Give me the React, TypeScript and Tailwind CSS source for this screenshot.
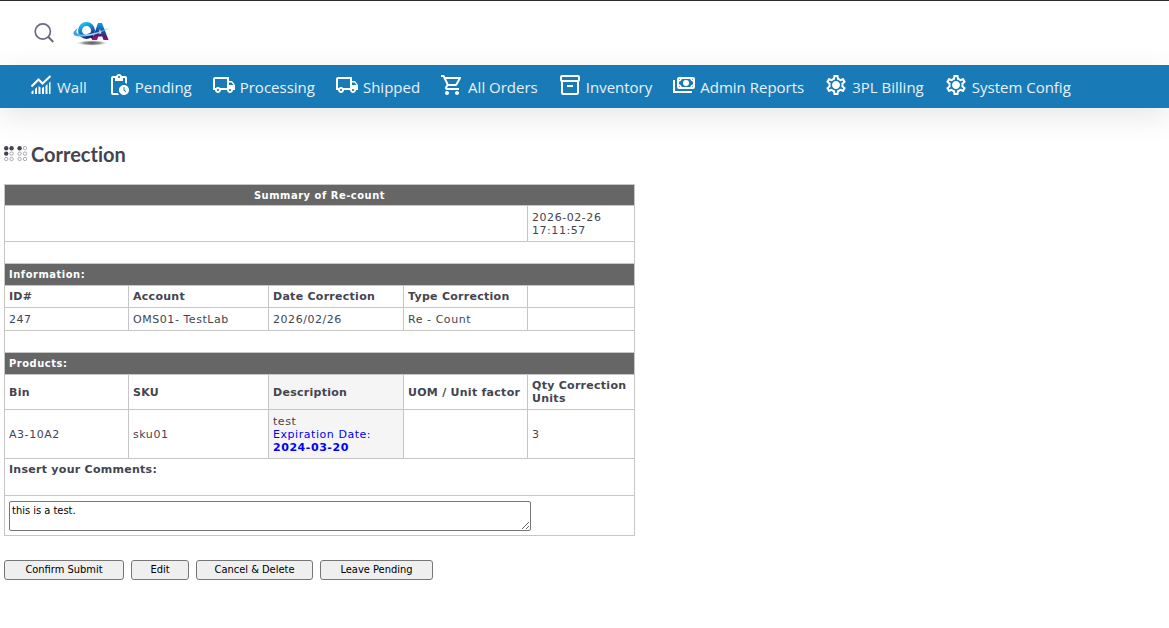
import type { ReactNode } from "react";
import {
  MdPendingActions,
  MdOutlineLocalShipping,
  MdOutlineSettings,
  MdOutlineShoppingCart,
  MdOutlineInventory2,
} from "react-icons/md";

function ChartIcon() {
  return (
    <svg viewBox="0 0 24 24" className="size-6" fill="currentColor" aria-hidden="true">
      <path d="M2.500 18.500 4.500 17v4h-2zM6 16l2-2v7H6zM9.500 13l2 1.500V21h-2zM13 15l2-1.500V21h-2zM16.500 13l2-2v10h-2zM20 10l1.500-1.500V21H20z" />
      <path d="m2.500 13.500 7-7 4 4 8-7.500" fill="none" stroke="currentColor" strokeWidth="2" />
    </svg>
  );
}

function GearIcon() {
  return (
    <span className="relative block size-6">
      <MdOutlineSettings className="size-6" />
      <svg viewBox="0 0 24 24" className="absolute inset-0 size-6" aria-hidden="true">
        <circle cx="12" cy="12" r="3" fill="currentColor" />
      </svg>
    </span>
  );
}

function PaymentsIcon() {
  return (
    <svg viewBox="0 0 24 24" className="size-6" aria-hidden="true">
      <path d="M2 7v12h18" fill="none" stroke="currentColor" strokeWidth="2" />
      <rect x="6" y="5" width="16" height="10" rx="1" fill="none" stroke="currentColor" strokeWidth="2" />
      <path d="M6 8a3 3 0 0 0 3-3M22 8a3 3 0 0 1-3-3M6 12a3 3 0 0 1 3 3M22 12a3 3 0 0 0-3 3" fill="none" stroke="currentColor" strokeWidth="1.500" />
      <circle cx="14" cy="10" r="3" fill="currentColor" />
    </svg>
  );
}

function Logo() {
  return (
    <svg viewBox="0 0 40 28" className="h-7 w-10" role="img" aria-label="QA">
      <defs>
        <linearGradient id="qa-q" x1=".2" y1="0" x2=".7" y2="1">
          <stop offset="0" stopColor="#16c0f0" />
          <stop offset=".5" stopColor="#1878c4" />
          <stop offset="1" stopColor="#1d2a78" />
        </linearGradient>
        <linearGradient id="qa-a" x1=".6" y1="0" x2=".4" y2="1">
          <stop offset="0" stopColor="#12a5e2" />
          <stop offset=".5" stopColor="#1c4c9c" />
          <stop offset=".75" stopColor="#5a1672" />
          <stop offset="1" stopColor="#b80a80" />
        </linearGradient>
        <linearGradient id="qa-swoosh" x1="0" x2="1">
          <stop offset="0" stopColor="#2b9fdb" />
          <stop offset=".5" stopColor="#a5e0f6" />
          <stop offset="1" stopColor="#38a8dc" />
        </linearGradient>
        <radialGradient id="qa-shadow">
          <stop offset="0" stopColor="#555" />
          <stop offset=".5" stopColor="#999" />
          <stop offset="1" stopColor="#fff" stopOpacity="0" />
        </radialGradient>
      </defs>
      <ellipse cx="20" cy="24" rx="17" ry="3" fill="url(#qa-shadow)" />
      <ellipse cx="14.500" cy="11.500" rx="6.500" ry="6.500" fill="none" stroke="url(#qa-q)" strokeWidth="4" />
      <path d="m15 15 6 6h4l-6-7z" fill="#221f6c" />
      <path fillRule="evenodd" d="M26 4h4l6.500 17h-5l-1.200-3.500h-4L25 21h-5zM28 10l-1.500 4.500h3z" fill="url(#qa-a)" />
      <path d="M6 9C-1 13 0 18 10 17.500c10 0 20-4 28-9-9 4-18 7-27 7C4 15.500 3 13 6 9Z" fill="url(#qa-swoosh)" />
    </svg>
  );
}

const links: { label: string; icon: ReactNode }[] = [
  { label: "Wall", icon: <ChartIcon /> },
  { label: "Pending", icon: <MdPendingActions className="size-6" /> },
  { label: "Processing", icon: <MdOutlineLocalShipping className="size-6" /> },
  { label: "Shipped", icon: <MdOutlineLocalShipping className="size-6" /> },
  { label: "All Orders", icon: <MdOutlineShoppingCart className="size-6" /> },
  { label: "Inventory", icon: <MdOutlineInventory2 className="size-6" /> },
  { label: "Admin Reports", icon: <PaymentsIcon /> },
  { label: "3PL Billing", icon: <GearIcon /> },
  { label: "System Config", icon: <GearIcon /> },
];

function BrailleIcon() {
  const dots = [0, 1, 2, 3].flatMap((c) => [0, 1, 2].map((r) => ({ c, r })));
  const filled = ["0-0", "1-0", "2-0", "0-1"];
  const xs = [2.2, 7.6, 15.6, 21];
  return (
    <svg viewBox="0 0 24 16" className="h-4 w-6 shrink-0" aria-hidden="true">
      {dots.map(({ c, r }) =>
        filled.includes(`${c}-${r}`) ? (
          <circle key={`${c}-${r}`} cx={xs[c]} cy={2.2 + r * 5.4} r="2.200" fill="#444450" />
        ) : (
          <circle key={`${c}-${r}`} cx={xs[c]} cy={2.2 + r * 5.4} r="1.700" fill="none" stroke="#98989e" strokeWidth=".8" />
        ),
      )}
    </svg>
  );
}

const cell = "border border-[#c6c6c6] px-1 text-left";
const head = "border border-[#c6c6c6] px-1 text-left tracking-wide";
const band =
  "border border-[#c6c6c6] bg-[#666] px-1 font-bold text-white font-['DejaVu_Sans_Condensed','DejaVu_Sans',sans-serif]";
const button =
  "h-5 rounded-[3px] border border-[#767676] bg-[#efefef] text-center text-[11px] leading-4 text-black font-['DejaVu_Sans_Condensed','DejaVu_Sans',sans-serif]";

export default function App() {
  return (
    <div className="min-h-screen bg-white text-[#444450] font-['DejaVu_Sans',sans-serif]">
      <header className="flex h-[65px] items-center gap-4 border-t border-[#2b2a33] pl-8">
        <button type="button" aria-label="Search" className="text-[#6a6a80]">
          <svg viewBox="0 0 24 24" className="size-6" fill="none" stroke="currentColor" strokeWidth="1.700" aria-hidden="true">
            <circle cx="10.800" cy="10.500" r="7.600" />
            <path d="m16.300 16 5 5" strokeWidth="2" />
          </svg>
        </button>
        <Logo />
      </header>
      <nav className="flex h-[43px] items-center gap-5 bg-[#187ab6] pl-[29px] text-[15px] text-white shadow-[0_8px_30px_rgba(0,0,0,0.1)] font-['Open_Sans',sans-serif]">
        {links.map(({ label, icon }) => (
          <a key={label} href="#" className="flex items-center gap-1 whitespace-nowrap">
            <span className="pb-1">{icon}</span>
            <span className="pt-0.5 text-white/90">{label}</span>
          </a>
        ))}
      </nav>
      <main className="px-1 pt-8">
        <h1 className="flex items-center gap-[3px] text-xl leading-7 font-bold [font-variant-ligatures:none] font-['Lato',sans-serif]">
          <BrailleIcon />
          Correction
        </h1>
        <table className="mt-4 w-[631px] max-w-full table-fixed border-collapse text-[11px] leading-[13px] tracking-wider">
          <colgroup>
            <col className="w-[124px]" />
            <col className="w-[140px]" />
            <col className="w-[135px]" />
            <col className="w-[124px]" />
            <col />
          </colgroup>
          <tbody>
            <tr className="h-[21px]">
              <th colSpan={5} className={`${band} text-center`}>Summary of Re-count</th>
            </tr>
            <tr className="h-9">
              <td colSpan={4} className={cell} />
              <td className={cell}>2026-02-26 17:11:57</td>
            </tr>
            <tr className="h-[22px]"><td colSpan={5} className={cell} /></tr>
            <tr className="h-[22px]"><th colSpan={5} className={`${band} text-left`}>Information:</th></tr>
            <tr className="h-[22px]">
              <th className={head}>ID#</th>
              <th className={head}>Account</th>
              <th className={head}>Date Correction</th>
              <th className={head}>Type Correction</th>
              <td className={cell} />
            </tr>
            <tr className="h-[23px]">
              <td className={cell}>247</td>
              <td className={cell}>OMS01- TestLab</td>
              <td className={cell}>2026/02/26</td>
              <td className={cell}>Re - Count</td>
              <td className={cell} />
            </tr>
            <tr className="h-[22px]"><td colSpan={5} className={cell} /></tr>
            <tr className="h-[22px]"><th colSpan={5} className={`${band} text-left`}>Products:</th></tr>
            <tr className="h-[35px]">
              <th className={head}>Bin</th>
              <th className={head}>SKU</th>
              <th className={`${head} bg-[#f5f5f5]`}>Description</th>
              <th className={`${head} whitespace-nowrap`}>UOM / Unit factor</th>
              <th className={head}>Qty Correction Units</th>
            </tr>
            <tr className="h-[49px]">
              <td className={cell}>A3-10A2</td>
              <td className={cell}>sku01</td>
              <td className={`${cell} bg-[#f5f5f5]`}>
                test
                <div className="text-[#0000ff]">
                  Expiration Date: <b className="block">2024-03-20</b>
                </div>
              </td>
              <td className={cell} />
              <td className={cell}>3</td>
            </tr>
            <tr className="h-[37px]">
              <th colSpan={5} className={`${head} pt-1 align-top`}>
                <label htmlFor="comments">Insert your Comments:</label>
              </th>
            </tr>
            <tr className="h-10">
              <td colSpan={5} className={cell}>
                <textarea
                  id="comments"
                  defaultValue="this is a test."
                  className="block h-[30px] w-[522px] max-w-full overflow-hidden rounded-[2px] border border-[#767676] bg-white p-0.5 text-[11px] leading-[13px] tracking-normal text-black font-['DejaVu_Sans_Condensed','DejaVu_Sans',sans-serif]"
                />
              </td>
            </tr>
          </tbody>
        </table>
        <div className="mt-6 flex flex-wrap gap-[7px]">
          <button type="button" className={`${button} w-[120px]`}>Confirm Submit</button>
          <button type="button" className={`${button} w-[58px]`}>Edit</button>
          <button type="button" className={`${button} w-[117px]`}>Cancel &amp; Delete</button>
          <button type="button" className={`${button} w-[113px]`}>Leave Pending</button>
        </div>
      </main>
    </div>
  );
}
